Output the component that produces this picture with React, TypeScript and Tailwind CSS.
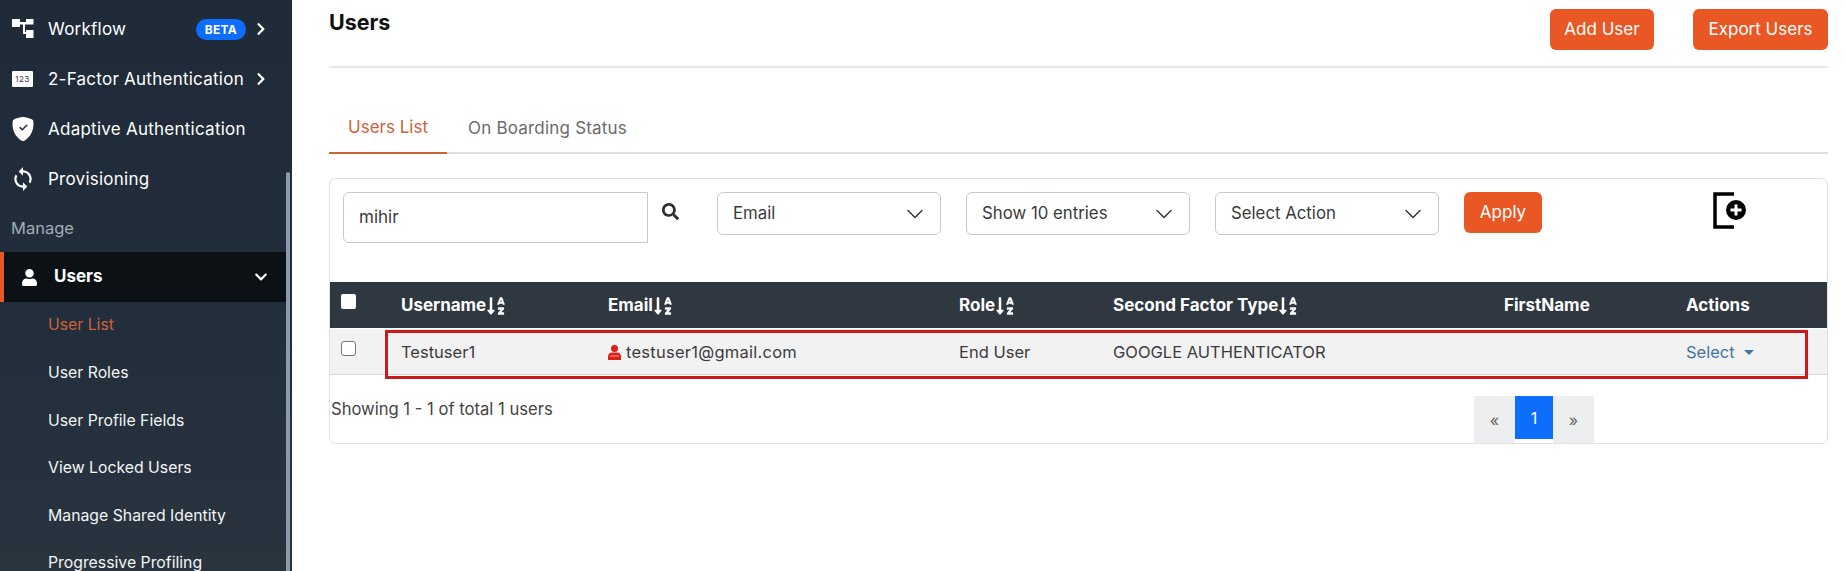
import { ChevronDown } from 'lucide-react';
import { BsShieldFillCheck } from 'react-icons/bs';
import {
    FaChevronDown,
    FaChevronRight,
    FaSearch,
    FaSortAlphaDown,
    FaUser,
} from 'react-icons/fa';
import { MdSync } from 'react-icons/md';

const font = { fontFamily: 'Inter, "Liberation Sans", sans-serif' };

function WorkflowIcon() {
    return (
        <svg width="22" height="20" viewBox="0 0 22 20" fill="#fff">
            <rect x="0" y="0" width="8" height="8" />
            <rect x="8" y="3" width="6" height="2.5" />
            <rect x="14" y="0" width="7.5" height="5.5" />
            <rect x="11" y="3" width="2" height="12" />
            <rect x="11" y="13" width="3" height="2" />
            <rect x="14" y="11" width="7.5" height="8" />
        </svg>
    );
}

function CounterIcon() {
    return (
        <div className="flex h-[16px] w-[21px] items-center justify-center rounded-[1px] bg-white text-[8px] tracking-[0.5px] text-[#333]">
            123
        </div>
    );
}

function ImportIcon() {
    return (
        <svg width="34" height="37" viewBox="0 0 34 37">
            <path d="M21 2H2v33h19" fill="none" stroke="#000" strokeWidth="3.5" />
            <circle cx="23" cy="18" r="10" fill="#000" />
            <path d="M23 12.5v11M17.5 18h11" stroke="#fff" strokeWidth="3" />
        </svg>
    );
}

function SecureUserIcon() {
    return (
        <svg width="13" height="15" viewBox="0 0 13 15" fill="#dc1f14">
            <circle cx="6.5" cy="3.5" r="3.5" />
            <path d="M0 15v-3.5C0 9 2 7.5 4 7.5h5c2 0 4 1.5 4 4V15z" />
            <rect x="2" y="10.5" width="9" height="1" fill="#f2a09a" />
        </svg>
    );
}

const topMenu = [
    { label: 'Workflow', icon: <WorkflowIcon />, beta: true, arrow: true },
    { label: '2-Factor Authentication', icon: <CounterIcon />, arrow: true },
    { label: 'Adaptive Authentication', icon: <BsShieldFillCheck size={24} className="-ml-[1px]" /> },
    { label: 'Provisioning', icon: <MdSync size={26} className="-ml-[2px]" /> },
];

const subMenu = ['User List', 'User Roles', 'User Profile Fields', 'View Locked Users', 'Manage Shared Identity', 'Progressive Profiling'];

const columns = [
    { label: 'Username', sort: true },
    { label: 'Email', sort: true },
    { label: 'Role', sort: true },
    { label: 'Second Factor Type', sort: true },
    { label: 'FirstName' },
    { label: 'Actions' },
];

const rowGrid = 'grid grid-cols-[71px_207px_351px_154px_391px_182px_1fr] items-center';

function Sidebar() {
    return (
        <aside className="relative h-full w-[292px] shrink-0 overflow-hidden bg-gradient-to-b from-[#1f2b38] via-[#212d3a] via-50% to-[#29343f] pt-[4px] text-white">
            {topMenu.map((item) => (
                <div key={item.label} className="flex h-[50px] items-center pl-[12px] pr-[24px]">
                    <span className="flex w-[36px] shrink-0 justify-start">{item.icon}</span>
                    <span className="pt-[2px] text-[17px] tracking-[0.25px]">{item.label}</span>
                    {item.beta && (
                        <span className="ml-auto rounded-full bg-[#0d6efd] px-[9px] py-[3px] text-[12px] font-bold leading-[15px] tracking-[0.3px]">
                            BETA
                        </span>
                    )}
                    {item.arrow && <FaChevronRight size={14} className={item.beta ? 'ml-[8px]' : 'ml-auto'} />}
                </div>
            ))}
            <div className="flex h-[48px] items-center pl-[11px] text-[16.5px] text-[#a3abb3]">Manage</div>
            <div className="flex h-[50px] w-[286px] items-center border-l-[4px] border-[#e95725] bg-[#0c1116] pl-[17px] pr-[18px]">
                <FaUser size={17} />
                <span className="ml-[16px] text-[17px] font-bold">Users</span>
                <FaChevronDown size={14} className="ml-auto" />
            </div>
            <div className="-mt-[0.5px]">
                {subMenu.map((label, i) => (
                    <div
                        key={label}
                        className={`flex h-[47.6px] items-center pl-[48px] text-[15.8px] ${i === 0 ? 'text-[#d0623a]' : 'text-[#f2f4f5]'}`}
                    >
                        {label}
                    </div>
                ))}
            </div>
            <div className="absolute right-[2px] top-[172px] bottom-0 w-[4px] rounded-t-full bg-[#8a9bb0]" />
        </aside>
    );
}

function Dropdown({ label }: { label: string }) {
    return (
        <div className="mr-[25px] flex h-[43px] w-[224px] items-center justify-between rounded-[6px] border border-[#c9c9c9] pl-[15px] pr-[11px] text-[16.8px] text-[#3a3a3a]">
            <span>{label}</span>
            <ChevronDown size={28} strokeWidth={1.3} />
        </div>
    );
}

function UsersTable() {
    return (
        <div className="relative">
            <div className={`${rowGrid} h-[46px] bg-[#2f3740] text-[17px] font-bold text-white`}>
                <div className="pl-[11px]">
                    <input type="checkbox" className="block h-[15px] w-[15px] -translate-y-[4px] appearance-none rounded-[2px] bg-white" />
                </div>
                {columns.map((col) => (
                    <div key={col.label} className="flex items-center pt-[2px]">
                        {col.label}
                        {col.sort && <FaSortAlphaDown size={20} />}
                    </div>
                ))}
            </div>
            <div className={`${rowGrid} mt-[1px] h-[46px] border-b border-[#d5d5d5] bg-[#f2f2f2] pt-[2px] text-[16.5px] text-[#3c3c3c]`}>
                <div className="pl-[11px]">
                    <input type="checkbox" className="block h-[15px] w-[15px] -translate-y-[4px] appearance-none rounded-[3px] border border-[#777] bg-white" />
                </div>
                <div>Testuser1</div>
                <div className="flex items-center gap-[5px] tracking-[0.25px]">
                    <SecureUserIcon />
                    testuser1@gmail.com
                </div>
                <div>End User</div>
                <div>GOOGLE AUTHENTICATOR</div>
                <div />
                <div className="flex items-center gap-[9px] text-[#44749f]">
                    Select
                    <span className="h-0 w-0 border-x-[5px] border-t-[5px] border-x-transparent border-t-[#44749f]" />
                </div>
            </div>
            {/* annotation box drawn over the row */}
            <div className="absolute left-[55px] top-[48px] h-[49px] w-[1423px] border-[3px] border-[#cc1a1a]" />
        </div>
    );
}

function Pagination() {
    return (
        <div className="mr-[233px] flex items-start text-[16px]">
            <span className="flex h-[47px] w-[41px] items-center justify-center bg-[#eceeef] text-[#666]">«</span>
            <span className="flex h-[43px] w-[38px] items-center justify-center bg-[#0d6efd] text-white">1</span>
            <span className="flex h-[47px] w-[41px] items-center justify-center bg-[#eceeef] text-[#666]">»</span>
        </div>
    );
}

export default function App() {
    return (
        <div className="flex h-[571px] overflow-hidden bg-white" style={font}>
            <Sidebar />
            <main className="min-w-0 flex-1 pl-[37px] pr-[17px]">
                {/* Page header */}
                <div className="flex h-[68px] items-start justify-between border-b-2 border-[#e8e8e8]">
                    <h1 className="pt-[9px] text-[21.5px] font-bold leading-[26px] text-[#111]">Users</h1>
                    <div className="flex gap-[39px] pt-[9px]">
                        <button className="h-[41px] w-[104px] rounded-[6px] bg-[#e95725] text-[17px] text-white">Add User</button>
                        <button className="h-[41px] w-[135px] rounded-[6px] bg-[#e95725] text-[17px] text-white">Export Users</button>
                    </div>
                </div>

                {/* Tabs */}
                <div className="mt-[40px] flex h-[46px] items-end border-b-2 border-[#e0e0e0] text-[17px]">
                    <div className="-mb-[2px] flex h-[46px] w-[118px] items-center justify-center border-b-2 border-[#cf6238] pb-[4px] text-[#cf6238]">Users List</div>
                    <div className="flex h-[44px] items-center pb-[2px] pl-[21px] tracking-[0.2px] text-[#6b6b6b]">On Boarding Status</div>
                </div>

                {/* Card */}
                <div className="mt-[24px] h-[266px] rounded-[6px] border border-[#e2e2e2]">
                    <div className="flex h-[103px] items-start pl-[13px] pt-[13px]">
                        <input
                            defaultValue="mihir"
                            className="h-[51px] w-[305px] rounded-l-[6px] border border-[#c9c9c9] pb-[1px] pl-[15px] text-[17px] text-[#3a3a3a] outline-none"
                        />
                        <FaSearch size={17} className="ml-[14px] mr-[38px] mt-[11px] text-[#2f2f2f]" />
                        <Dropdown label="Email" />
                        <Dropdown label="Show 10 entries" />
                        <Dropdown label="Select Action" />
                        <button className="h-[41px] w-[78px] rounded-[6px] bg-[#e95725] text-[17px] text-white">Apply</button>
                        <div className="ml-[171px]">
                            <ImportIcon />
                        </div>
                    </div>
                    <UsersTable />
                    <div className="flex h-[68px] items-start justify-between pt-[21px]">
                        <span className="pl-[1px] pt-[10px] text-[16.6px] leading-[7px] text-[#444]">Showing 1 - 1 of total 1 users</span>
                        <Pagination />
                    </div>
                </div>
            </main>
        </div>
    );
}
